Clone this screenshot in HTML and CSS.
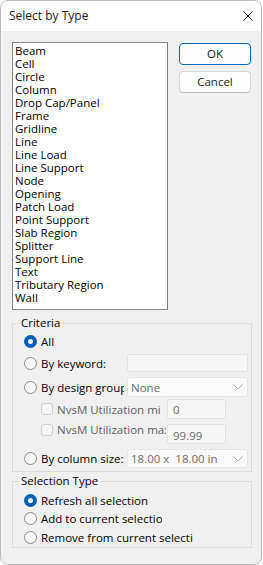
FILE: index.html
```html
<!DOCTYPE html>
<html>
<head>
<meta charset="utf-8">
<link rel="stylesheet" href="styles.css">
</head>
<body>
<div class="window">
  <div class="titlebar">
    <span class="title">Select by Type</span>
    <svg class="close" width="10" height="10" viewBox="0 0 10 10"><path d="M0.5 0.5 L9.5 9.5 M9.5 0.5 L0.5 9.5" stroke="#1a1a1a" stroke-width="1" fill="none"/></svg>
  </div>
  <div class="body">
    <div class="top">
      <div class="listbox">
        <div class="item">Beam</div>
        <div class="item">Cell</div>
        <div class="item">Circle</div>
        <div class="item">Column</div>
        <div class="item">Drop Cap/Panel</div>
        <div class="item">Frame</div>
        <div class="item">Gridline</div>
        <div class="item">Line</div>
        <div class="item">Line Load</div>
        <div class="item">Line Support</div>
        <div class="item">Node</div>
        <div class="item">Opening</div>
        <div class="item">Patch Load</div>
        <div class="item">Point Support</div>
        <div class="item">Slab Region</div>
        <div class="item">Splitter</div>
        <div class="item">Support Line</div>
        <div class="item">Text</div>
        <div class="item">Tributary Region</div>
        <div class="item">Wall</div>
      </div>
      <div class="buttons">
        <button class="btn default">OK</button>
        <button class="btn">Cancel</button>
      </div>
    </div>

    <fieldset class="group criteria">
      <legend>Criteria</legend>
      <div class="row r-all">
        <span class="radio checked"></span>
        <span class="label">All</span>
      </div>
      <div class="row r-keyword">
        <span class="radio"></span>
        <span class="label">By keyword:</span>
        <span class="field wide"></span>
      </div>
      <div class="row r-design">
        <span class="radio"></span>
        <span class="label">By design group:</span>
        <span class="combo"><span class="combo-text">None</span><svg class="chev" width="10" height="6" viewBox="0 0 10 6"><path d="M0.5 0.5 L5 5 L9.5 0.5" stroke="#a8a8a8" stroke-width="1" fill="none"/></svg></span>
      </div>
      <div class="row r-min">
        <span class="check"></span>
        <span class="label dim lmin">NvsM Utilization minimum</span>
        <span class="field small">0</span>
      </div>
      <div class="row r-max">
        <span class="check"></span>
        <span class="label dim lmax">NvsM Utilization maximum</span>
        <span class="field small low">99.99</span>
      </div>
      <div class="row r-col">
        <span class="radio"></span>
        <span class="label">By column size:</span>
        <span class="combo"><span class="combo-text">18.00 x&nbsp;&nbsp;18.00 in</span><svg class="chev" width="10" height="6" viewBox="0 0 10 6"><path d="M0.5 0.5 L5 5 L9.5 0.5" stroke="#a8a8a8" stroke-width="1" fill="none"/></svg></span>
      </div>
    </fieldset>

    <fieldset class="group seltype">
      <legend>Selection Type</legend>
      <div class="row s1">
        <span class="radio checked"></span>
        <span class="label">Refresh all selection</span>
      </div>
      <div class="row s2">
        <span class="radio"></span>
        <span class="label ladd">Add to current selection</span>
      </div>
      <div class="row s3">
        <span class="radio"></span>
        <span class="label lrem">Remove from current selection</span>
      </div>
    </fieldset>
  </div>
</div>
</body>
</html>
```
FILE: styles.css
```css
* { box-sizing: border-box; }
html, body { margin: 0; padding: 0; background: #ffffff; }
body {
  font-family: "Open Sans", "Noto Sans", sans-serif;
  font-size: 11.5px;
  color: #000;
}
.window {
  width: 262px;
  height: 565px;
  border: 1px solid #bcbcbc;
  border-radius: 8px;
  overflow: hidden;
  display: flex;
  flex-direction: column;
  background: #f0f0f0;
}
.titlebar {
  height: 30px;
  flex: none;
  background: #ffffff;
  display: flex;
  align-items: center;
  justify-content: space-between;
  padding: 0 8px 0 8px;
}
.title { color: #1a1a1a; line-height: 16px; font-size: 12px; }
.close { display: block; margin-top: 0; }

.body {
  flex: 1;
  padding: 11px 10px 0 11px;
  display: flex;
  flex-direction: column;
}
.top { display: flex; gap: 11px; align-items: flex-start; }
.listbox {
  width: 156px;
  height: 268px;
  border: 1px solid #828282;
  background: #ffffff;
  padding: 1px 2px;
  overflow: hidden;
}
.item { height: 13px; line-height: 13px; white-space: nowrap; }
.buttons { display: flex; flex-direction: column; gap: 6px; padding-top: 1px; }
.btn {
  width: 72px;
  height: 22px;
  border: 1px solid #d3d3d3;
  border-bottom-color: #bdbdbd;
  border-radius: 4px;
  background: #fdfdfd;
  font: inherit;
  color: #1a1a1a;
  padding: 0;
  line-height: 18px;
}
.btn.default { border-color: #0067c0; }

.group {
  margin: 0;
  padding: 0;
  width: 240px;
  min-width: 0;
  border: 1px solid #dcdcdc;
  border-radius: 0;
}
.group legend {
  margin-left: 6px;
  padding: 0 2px;
  line-height: 16px;
  color: #000;
}
.criteria { margin-top: 5px; padding-bottom: 3px; }
.seltype { margin-top: 1px; padding-bottom: 1px; }

.row {
  display: flex;
  align-items: center;
  padding-left: 11px;
  padding-right: 3px;
  white-space: nowrap;
}
.row .label { margin-left: 4px; overflow: hidden; flex: 1; min-width: 0; margin-right: 3px; }
.r-all { height: 18px; margin-top: 1px; }
.r-keyword { height: 18px; margin-top: 4px; }
.r-design { height: 20px; margin-top: 5px; }
.r-min { height: 20px; margin-top: 2px; padding-left: 28px; }
.r-max { height: 20px; margin-top: 5px; padding-left: 28px; align-items: flex-start; }
.r-col { height: 19px; margin-top: 5px; }

.s1 { height: 18px; margin-top: 2px; }
.s2 { height: 19px; }
.s3 { height: 18px; }
.seltype .row .label { flex: none; margin-right: 0; }
.row .ladd { width: 121px; }
.row .lrem { width: 152px; }

.radio {
  flex: none;
  width: 13px;
  height: 13px;
  border-radius: 50%;
  border: 1px solid #8a8a8a;
  background: #f7f7f7;
  position: relative;
}
.radio.checked { border: none; background: #005fb8; }
.radio.checked::after {
  content: "";
  position: absolute;
  left: 4px; top: 4px;
  width: 5px; height: 5px;
  border-radius: 50%;
  background: #ffffff;
}
.check {
  flex: none;
  width: 12px;
  height: 12px;
  border: 1px solid #cfcfcf;
  border-radius: 3px;
  background: #f6f6f6;
}
.r-max .label { line-height: 12px; height: 12px; }
.dim { color: #5f5f5f; }
.row .lmin { flex: none; width: 103px; margin-right: 7px; }
.row .lmax { flex: none; width: 109px; margin-right: 1px; }

.field {
  flex: none;
  display: flex;
  align-items: center;
  background: #f6f6f6;
  border: 1px solid #e2e2e2;
  border-radius: 2px;
  color: #6d6d6d;
  padding-left: 5px;
}
.field.wide { width: 121px; height: 18px; }
.field.small { width: 59px; height: 20px; }
.field.low { align-items: flex-end; padding-bottom: 0; }

.combo {
  flex: none;
  width: 121px;
  height: 100%;
  display: flex;
  align-items: center;
  justify-content: space-between;
  background: #fafafa;
  border: 1px solid #e6e6e6;
  border-radius: 3px;
  padding: 0 4px 0 3px;
  color: #6d6d6d;
}
.chev { display: block; }
```
